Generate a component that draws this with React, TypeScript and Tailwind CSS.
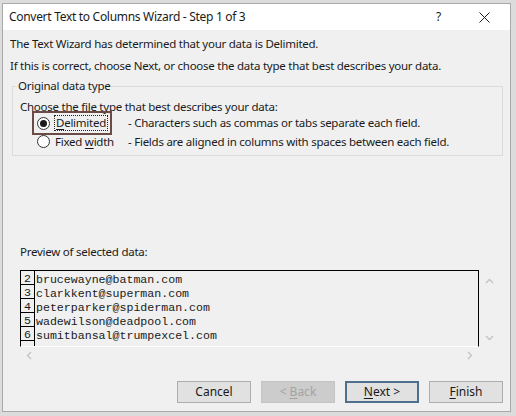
import React from "react"

const ui = { fontFamily: '"Noto Sans", "Open Sans", Arial, sans-serif' }
const mono = { fontFamily: '"Liberation Mono", "Courier New", monospace' }

const rows = [
  { n: 2, v: "brucewayne@batman.com" },
  { n: 3, v: "clarkkent@superman.com" },
  { n: 4, v: "peterparker@spiderman.com" },
  { n: 5, v: "wadewilson@deadpool.com" },
  { n: 6, v: "sumitbansal@trumpexcel.com" },
]

function Chevron({ dir }: { dir: "up" | "down" | "left" | "right" }) {
  const d = {
    up: "M1 6 L4.5 2.5 L8 6",
    down: "M1 3 L4.5 6.5 L8 3",
    left: "M6 1 L2.5 4.5 L6 8",
    right: "M3 1 L6.5 4.5 L3 8",
  }[dir]
  return (
    <svg width="9" height="9" viewBox="0 0 9 9" className="block">
      <path d={d} fill="none" stroke="#c2c2c2" strokeWidth="1.3" />
    </svg>
  )
}

function Radio({ checked }: { checked?: boolean }) {
  return (
    <span className="w-[13px] h-[13px] rounded-full border border-[#333333] bg-white flex items-center justify-center shrink-0">
      {checked && <span className="w-[7px] h-[7px] rounded-full bg-[#1a1a1a]" />}
    </span>
  )
}

function Btn({ children, kind }: { children: React.ReactNode; kind?: "disabled" | "default" }) {
  const base = "w-[74px] h-[22px] flex items-center justify-center text-[12px]"
  if (kind === "disabled")
    return <div className={`${base} bg-[#cccccc] border border-[#c4c4c4] text-[#a3a3a3]`}>{children}</div>
  if (kind === "default")
    return <div className={`${base} bg-[#e1e1e1] border-2 border-[#4f6f8f] text-[#1a1a1a]`}>{children}</div>
  return <div className={`${base} bg-[#e1e1e1] border border-[#adadad] text-[#1a1a1a]`}>{children}</div>
}

export default function App() {
  return (
    <div className="w-[516px] h-[416px] bg-[#dcdcdc] pt-[3px] pl-[2px]" style={ui}>
      <div className="w-[509px] h-[409px] border border-[#a9a9a9] bg-[#f0f0f0] flex flex-col text-[11.5px] tracking-[-0.25px] text-[#1a1a1a]">
        {/* title bar */}
        <div className="h-[26px] bg-white flex items-center pl-[6px] pr-[20px] shrink-0">
          <span className="flex-1 leading-[16px] text-[12px] tracking-[-0.3px]">Convert Text to Columns Wizard - Step 1 of 3</span>
          <span className="mr-[38px] leading-[16px] text-[12px]">?</span>
          <svg width="11" height="11" viewBox="0 0 11 11">
            <path d="M0.5 0.5 L10.5 10.5 M10.5 0.5 L0.5 10.5" stroke="#1a1a1a" strokeWidth="1" />
          </svg>
        </div>

        <div className="flex flex-col pl-[7px] pr-[7px] pt-[6px]">
          <div className="leading-[16px]">The Text Wizard has determined that your data is Delimited.</div>
          <div className="leading-[16px] mt-[6px]">
            If this is correct, choose Next, or choose the data type that best describes your data.
          </div>

          <fieldset className="mt-[4px] ml-[2px] border border-[#dcdcdc] pb-[4px]">
            <legend className="ml-[4px] px-[1px] leading-[16px]">Original data type</legend>
            <div className="pl-[7px] leading-[14px] mt-[6px]">Choose the file type that best describes your data:</div>
            <div className="relative h-[18px] flex items-center pl-[24px]">
              <div className="absolute left-[19px] top-[-3px] w-[80px] h-[24px] border-2 border-[#6c4a45]" />
              <Radio checked />
              <div className="w-[78px] shrink-0 flex">
                <span className="ml-[4px] px-[1px] border border-dotted border-[#222] leading-[14px]">
                  <span className="underline underline-offset-2">D</span>elimited
                </span>
              </div>
              <span>- Characters such as commas or tabs separate each field.</span>
            </div>
            <div className="h-[19px] flex items-center pl-[24px]">
              <Radio />
              <div className="w-[78px] shrink-0 pl-[5px]">
                Fixed <span className="underline underline-offset-2">w</span>idth
              </div>
              <span>- Fields are aligned in columns with spaces between each field.</span>
            </div>
          </fieldset>

          <div className="mt-[88px] ml-[10px] leading-[16px]">Preview of selected data:</div>

          <div className="mt-[10px] ml-[10px] flex">
            <div className="w-[459px] h-[77px] border border-black border-b-white overflow-hidden tracking-normal">
              {rows.map(r => (
                <div key={r.n} className="flex h-[14px]">
                  <div
                    className="w-[14px] border-r border-b border-black text-[11.6px] leading-[13px] pt-[1px] text-center shrink-0"
                    style={mono}
                  >
                    {r.n}
                  </div>
                  <div className="pl-[1px] pt-[2px] text-[11.6px] leading-[13px]" style={mono}>
                    {r.v}
                  </div>
                </div>
              ))}
              <div className="w-[14px] h-[6px] border-r border-black" />
            </div>
            <div className="w-[19px] flex flex-col items-center justify-between pt-[7px] pb-[5px] pl-[1px]">
              <Chevron dir="up" />
              <Chevron dir="down" />
            </div>
          </div>
          <div className="ml-[10px] w-[459px] h-[16px] flex items-center justify-between px-[5px]">
            <Chevron dir="left" />
            <Chevron dir="right" />
          </div>

          <div className="mt-[18px] flex justify-end gap-[10px] tracking-normal">
            <Btn>Cancel</Btn>
            <Btn kind="disabled">
              &lt; <span className="underline underline-offset-2 ml-[3px]">B</span>ack
            </Btn>
            <Btn kind="default">
              <span className="underline underline-offset-2">N</span>ext &gt;
            </Btn>
            <Btn>
              <span className="underline underline-offset-2">F</span>inish
            </Btn>
          </div>
        </div>
      </div>
    </div>
  )
}
